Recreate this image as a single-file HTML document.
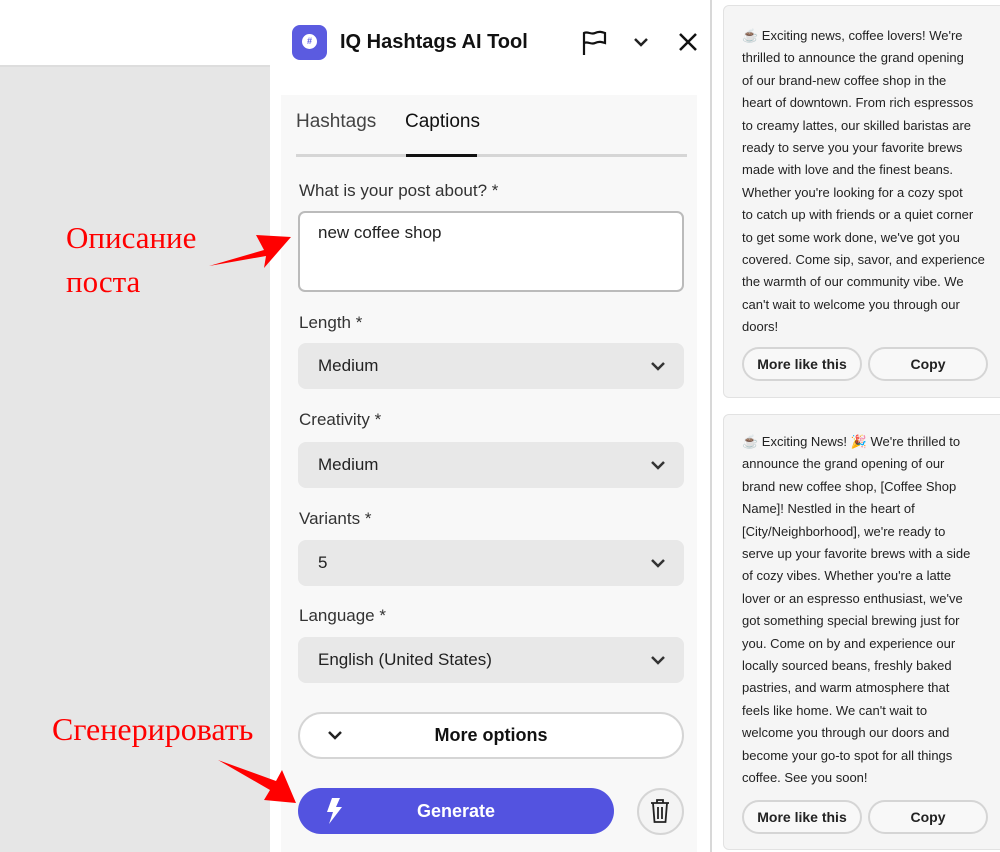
<!DOCTYPE html>
<html><head><meta charset="utf-8"><style>
*{box-sizing:border-box;margin:0;padding:0}
body{width:1000px;height:852px;position:relative;overflow:hidden;background:#fff;font-family:"Liberation Sans",sans-serif;color:#222}
.abs{position:absolute}
.leftgray{left:0;top:67px;width:270px;height:785px;background:#e6e6e6}
.topline{left:0;top:65px;width:270px;height:2px;background:#ddd}
.ru{font-family:"Liberation Serif",serif;color:#f00;font-size:31px;line-height:44px}
.inner{left:281px;top:95px;width:416px;height:757px;background:#f8f8f8}
.lbl{font-size:17px;color:#333}
.sel{left:298px;width:386px;height:46px;background:#e8e8e8;border-radius:8px;font-size:17px;padding-left:20px;line-height:46px;color:#222}
.sel svg{position:absolute;right:18px;top:17px}
.card{left:723px;width:290px;background:#f5f5f5;border:1px solid #e2e2e2;border-radius:6px}
.txt{position:absolute;left:18px;top:19px;font-size:13px;line-height:22.4px;white-space:nowrap;color:#222}
.btn{position:absolute;height:34px;border:2px solid #d5d5d5;border-radius:17px;background:#f8f8f8;font-weight:bold;font-size:14px;text-align:center;line-height:30px;color:#222}
</style></head><body>
<div class="abs topline"></div>
<div class="abs leftgray"></div>
<div class="abs ru" style="left:66px;top:216px">Описание<br>поста</div>
<div class="abs ru" style="left:52px;top:707px;font-size:32px">Сгенерировать</div>
<div class="abs" style="left:710px;top:0;width:2px;height:852px;background:#d8d8d8"></div>

<div class="abs" style="left:292px;top:25px;width:35px;height:35px;border-radius:8px;background:#5b5be0"></div>
<div class="abs" style="left:302px;top:34px;width:15px;height:15px;border-radius:50%;background:#fff;color:#5b5be0;font-size:9px;font-weight:bold;text-align:center;line-height:15px">#</div>
<div class="abs" style="left:340px;top:31px;font-size:20px;font-weight:bold;color:#111">IQ Hashtags AI Tool</div>
<svg class="abs" style="left:582px;top:30px" width="26" height="26" viewBox="0 0 26 26" fill="none" stroke="#111" stroke-width="2.2"><path d="M2 25V3c4-2 7 2 11 0s7-1 10 0v10c-3-1-6-2-10 0s-7-2-11 0"/></svg>
<svg class="abs" style="left:633px;top:36px" width="16" height="12" viewBox="0 0 16 12" fill="none" stroke="#222" stroke-width="2.5"><path d="M2 3l6 6 6-6"/></svg>
<svg class="abs" style="left:678px;top:32px" width="20" height="20" viewBox="0 0 20 20" stroke="#111" stroke-width="2.5"><path d="M2 2l16 16M18 2L2 18"/></svg>

<div class="abs inner"></div>
<div class="abs" style="left:296px;top:111px;font-size:19px;color:#444">Hashtags</div>
<div class="abs" style="left:405px;top:111px;font-size:19px;color:#111">Captions</div>
<div class="abs" style="left:296px;top:154px;width:391px;height:3px;background:#d6d6d6"></div>
<div class="abs" style="left:406px;top:154px;width:71px;height:3px;background:#111"></div>

<div class="abs lbl" style="left:299px;top:181px">What is your post about? *</div>
<div class="abs" style="left:298px;top:211px;width:386px;height:81px;border:2px solid #bbb;border-radius:7px;background:#fff;font-size:17px;padding:10px 18px;color:#222">new coffee shop</div>

<div class="abs lbl" style="left:299px;top:313px">Length *</div>
<div class="abs sel" style="top:343px">Medium<svg width="16" height="12" viewBox="0 0 16 12" fill="none" stroke="#333" stroke-width="2.5"><path d="M2 3l6 6 6-6"/></svg></div>
<div class="abs lbl" style="left:299px;top:410px">Creativity *</div>
<div class="abs sel" style="top:442px">Medium<svg width="16" height="12" viewBox="0 0 16 12" fill="none" stroke="#333" stroke-width="2.5"><path d="M2 3l6 6 6-6"/></svg></div>
<div class="abs lbl" style="left:299px;top:509px">Variants *</div>
<div class="abs sel" style="top:540px">5<svg width="16" height="12" viewBox="0 0 16 12" fill="none" stroke="#333" stroke-width="2.5"><path d="M2 3l6 6 6-6"/></svg></div>
<div class="abs lbl" style="left:299px;top:606px">Language *</div>
<div class="abs sel" style="top:637px">English (United States)<svg width="16" height="12" viewBox="0 0 16 12" fill="none" stroke="#333" stroke-width="2.5"><path d="M2 3l6 6 6-6"/></svg></div>

<div class="abs" style="left:298px;top:712px;width:386px;height:47px;border:2px solid #d5d5d5;border-radius:24px;background:#fff;text-align:center;line-height:43px;font-size:18px;font-weight:bold;color:#111">More options</div>
<svg class="abs" style="left:327px;top:729px" width="16" height="12" viewBox="0 0 16 12" fill="none" stroke="#222" stroke-width="2.5"><path d="M2 3l6 6 6-6"/></svg>

<div class="abs" style="left:298px;top:788px;width:316px;height:46px;border-radius:23px;background:#5353e0;color:#fff;text-align:center;line-height:46px;font-size:18px;font-weight:bold">Generate</div>
<svg class="abs" style="left:325px;top:797px" width="18" height="28" viewBox="0 0 18 28" fill="#fff"><path d="M7 1h8l-4 9h6L4 27l4-12H2z"/></svg>
<div class="abs" style="left:637px;top:788px;width:47px;height:47px;border-radius:50%;border:2px solid #d5d5d5;background:#f4f4f4"></div>
<svg class="abs" style="left:650px;top:799px" width="20" height="24" viewBox="0 0 20 24" fill="none" stroke="#222" stroke-width="1.8"><path d="M1 4h18M7 4V1h6v3M3 4l1.5 19h11L17 4M8 8v12M12 8v12"/></svg>

<svg class="abs" style="left:0;top:0" width="300" height="852" viewBox="0 0 300 852"><path d="M209 266L264 250L256 235L291 237L264 268L266 256Z" fill="#f00"/><path d="M218 760L270 790L264 800L296 803L282 770L276 781Z" fill="#f00"/></svg>

<div class="abs card" style="top:5px;height:393px">
<div class="txt">☕ Exciting news, coffee lovers! We're<br>thrilled to announce the grand opening<br>of our brand-new coffee shop in the<br>heart of downtown. From rich espressos<br>to creamy lattes, our skilled baristas are<br>ready to serve you your favorite brews<br>made with love and the finest beans.<br>Whether you're looking for a cozy spot<br>to catch up with friends or a quiet corner<br>to get some work done, we've got you<br>covered. Come sip, savor, and experience<br>the warmth of our community vibe. We<br>can't wait to welcome you through our<br>doors!</div>
<div class="btn" style="left:18px;top:341px;width:120px">More like this</div>
<div class="btn" style="left:144px;top:341px;width:120px">Copy</div>
</div>
<div class="abs card" style="top:414px;height:436px">
<div class="txt" style="top:16px">☕ Exciting News! 🎉 We're thrilled to<br>announce the grand opening of our<br>brand new coffee shop, [Coffee Shop<br>Name]! Nestled in the heart of<br>[City/Neighborhood], we're ready to<br>serve up your favorite brews with a side<br>of cozy vibes. Whether you're a latte<br>lover or an espresso enthusiast, we've<br>got something special brewing just for<br>you. Come on by and experience our<br>locally sourced beans, freshly baked<br>pastries, and warm atmosphere that<br>feels like home. We can't wait to<br>welcome you through our doors and<br>become your go-to spot for all things<br>coffee. See you soon!</div>
<div class="btn" style="left:18px;top:385px;width:120px">More like this</div>
<div class="btn" style="left:144px;top:385px;width:120px">Copy</div>
</div>
</body></html>
